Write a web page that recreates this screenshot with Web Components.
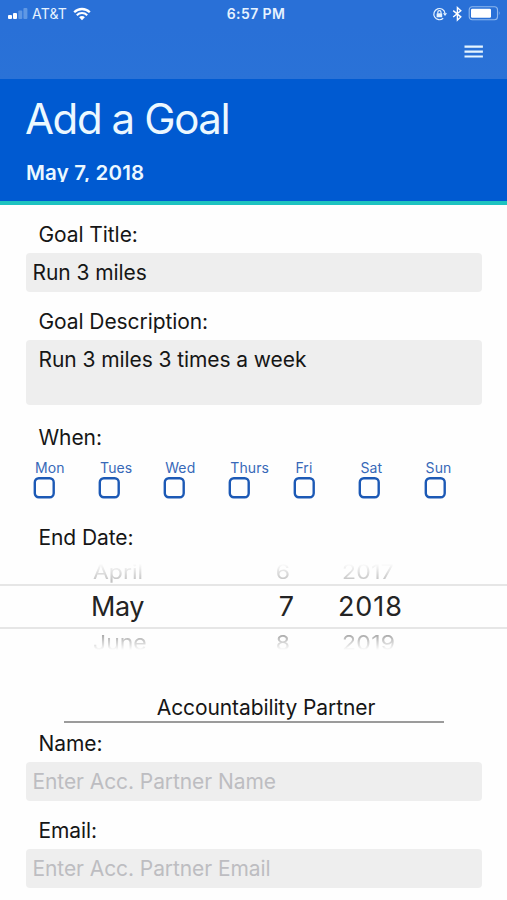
<!DOCTYPE html>
<html lang="en">
<head>
<meta charset="utf-8">
<title>Add a Goal</title>
<style>
  body {
    margin: 0;
    background: #fefefe;
    color: #161616;
    font-family: Inter, Roboto, "Liberation Sans", sans-serif;
  }
</style>
</head>
<body>
<goal-app>
  <status-bar carrier="AT&amp;T" time="6:57 PM"></status-bar>
  <nav-bar></nav-bar>
  <page-header>
    <span slot="title">Add a Goal</span>
    <span slot="date">May 7, 2018</span>
  </page-header>

  <form-field>
    <span slot="label">Goal Title:</span>Run 3 miles
  </form-field>
  <form-field multiline>
    <span slot="label">Goal Description:</span>Run 3 miles 3 times a week
  </form-field>
  <form-label style="margin-top: 21px">When:</form-label>
  <day-list>
    <day-check>Mon</day-check>
    <day-check>Tues</day-check>
    <day-check>Wed</day-check>
    <day-check>Thurs</day-check>
    <day-check>Fri</day-check>
    <day-check>Sat</day-check>
    <day-check>Sun</day-check>
  </day-list>
  <form-label style="margin-top: 27px">End Date:</form-label>
  <date-picker></date-picker>

  <section-title>Accountability Partner</section-title>
  <form-field placeholder style="margin-top: 9px">
    <span slot="label">Name:</span>Enter Acc. Partner Name
  </form-field>
  <form-field placeholder>
    <span slot="label">Email:</span>Enter Acc. Partner Email
  </form-field>
</goal-app>

<script>
class BaseElement extends HTMLElement {
  constructor() {
    super();
    this.attachShadow({ mode: 'open' });
    this.shadowRoot.innerHTML = this.render();
  }
}

class GoalApp extends BaseElement {
  render() {
    return `
      <style>
        :host {
          display: flex;
          flex-direction: column;
          width: 507px;
          height: 900px;
          overflow: hidden;
        }
      </style>
      <slot></slot>
    `;
  }
}

class StatusBar extends BaseElement {
  render() {
    return `
      <style>
        :host {
          display: grid;
          grid-template-columns: 1fr auto 1fr;
          align-items: center;
          height: 27px;
          box-sizing: border-box;
          padding: 0 6px 0 7px;
          background: #2970d7;
          color: #e6f3ff;
          font-size: 14px;
          line-height: 27px;
        }
        .left, .right { display: flex; align-items: center; }
        .right { justify-content: flex-end; }
        .carrier { margin: 0 6px 0 4px; letter-spacing: 0.2px; }
        .time { padding-left: 4px; font-weight: 600; letter-spacing: 0.4px; }
        svg { display: block; }
      </style>
      <div class="left">
        <svg width="21" height="13" viewBox="0 0 21 13">
          <rect x="1" y="8" width="4" height="4" rx="1" fill="#fff"/>
          <rect x="6" y="6" width="4" height="6" rx="1" fill="#fff"/>
          <rect x="11.3" y="3.5" width="4" height="8.5" rx="1" fill="#6098e4"/>
          <rect x="16.4" y="1" width="4" height="11" rx="1" fill="#6098e4"/>
        </svg>
        <span class="carrier">${this.getAttribute('carrier').replace('&', '&amp;')}</span>
        <svg width="18" height="14" viewBox="0 0 18 14">
          <path d="M1.2 5.2a11.1 11.1 0 0 1 15.6 0" fill="none" stroke="#fff" stroke-width="2.3"/>
          <path d="M3.8 8.2a7.3 7.3 0 0 1 10.4 0" fill="none" stroke="#fff" stroke-width="2.1"/>
          <path d="M6.1 10.2a4 4 0 0 1 5.8 0L9 13.2z" fill="#fff"/>
        </svg>
      </div>
      <div class="time">${this.getAttribute('time')}</div>
      <div class="right">
        <svg width="16" height="14" viewBox="0 0 16 14">
          <path d="M11.2 11.3A5.6 5.6 0 1 1 13 6.3" fill="none" stroke="#e6f3ff" stroke-width="1.2"/>
          <path d="M10.9 6.2h4.2l-2.1 2.9z" fill="#e6f3ff"/>
          <rect x="4.6" y="6.2" width="5.6" height="4" rx=".5" fill="#e6f3ff"/>
          <path d="M5.8 6.6V5.2a1.6 1.6 0 0 1 3.2 0v1.4" fill="none" stroke="#e6f3ff" stroke-width="1.2"/>
        </svg>
        <svg style="margin-left: 4px" width="11" height="16" viewBox="0 0 11 16">
          <path d="M1.2 4.6l7.6 6.3-3.4 3.3V1.6l3.4 3.1-7.6 6.3" fill="none" stroke="#fff" stroke-width="1.4"/>
        </svg>
        <svg style="margin-left: 5px" width="33" height="15" viewBox="0 0 33 15">
          <rect x="1.2" y=".8" width="28.3" height="13" rx="3" fill="none" stroke="#8fb8ee" stroke-width="1.1"/>
          <rect x="3" y="2.8" width="20" height="9" rx="1.2" fill="#fff"/>
          <path d="M30.9 5.1q1.6 2.2 0 4.4z" fill="#8fb8ee"/>
        </svg>
      </div>
    `;
  }
}

class NavBar extends BaseElement {
  render() {
    return `
      <style>
        :host {
          display: flex;
          justify-content: flex-end;
          height: 52px;
          box-sizing: border-box;
          padding: 18px 24px 0 0;
          background: linear-gradient(#2970d7, #2a72d7);
        }
      </style>
      <svg width="19" height="14" viewBox="0 0 19 14">
        <path d="M.5 1.7h18.4M.5 6.6h18.4M.5 11.5h18.4" stroke="#e6f5ff" stroke-width="2.2"/>
      </svg>
    `;
  }
}

class PageHeader extends BaseElement {
  render() {
    return `
      <style>
        :host {
          display: flex;
          flex-direction: column;
          height: 126px;
          box-sizing: border-box;
          padding: 15px 25px 0;
          background: #005ad1;
          border-bottom: 4px solid #1dc3c0;
          color: #ecf8ff;
        }
        .title {
          height: 50px;
          line-height: 50px;
          font-size: 42px;
          font-weight: 400;
          letter-spacing: -1.4px;
        }
        /* line box is shorter than the descenders */
        .date {
          height: 22px;
          margin-top: 16px;
          padding-left: 1px;
          line-height: 26px;
          font-size: 20.5px;
          font-weight: 600;
          letter-spacing: 0.2px;
          overflow: hidden;
        }
      </style>
      <div class="title"><slot name="title"></slot></div>
      <div class="date"><slot name="date"></slot></div>
    `;
  }
}

class FormLabel extends BaseElement {
  render() {
    return `
      <style>
        :host {
          display: block;
          height: 24px;
          padding-left: 38.5px;
          line-height: 24px;
          font-size: 21px;
          letter-spacing: -0.08px;
        }
      </style>
      <slot></slot>
    `;
  }
}

class FormField extends BaseElement {
  render() {
    return `
      <style>
        :host { display: block; margin-top: 18px; }
        .box {
          height: 39px;
          box-sizing: border-box;
          margin: 6px 25px 0 26px;
          padding-left: 6.5px;
          border-radius: 4px;
          background: #eee;
          font-size: 21px;
          line-height: 39px;
          letter-spacing: -0.08px;
          white-space: nowrap;
        }
        :host([multiline]) .box {
          height: 65px;
          padding: 8px 0 0 12.5px;
          line-height: 24px;
        }
        :host([placeholder]) .box { color: #bdbdc1; }
      </style>
      <form-label><slot name="label"></slot></form-label>
      <div class="box"><slot></slot></div>
    `;
  }
}

class DayList extends BaseElement {
  render() {
    return `
      <style>
        :host {
          display: grid;
          grid-template-columns: repeat(7, 65.1px);
          padding: 9px 0 0 33px;
        }
      </style>
      <slot></slot>
    `;
  }
}

class DayCheck extends BaseElement {
  render() {
    return `
      <style>
        :host {
          display: block;
          color: #3768b8;
          font-size: 14px;
          line-height: 17px;
        }
        .name { display: block; padding-left: 2px; letter-spacing: 0.1px; }
        svg { display: block; margin-top: 1px; }
      </style>
      <span class="name"><slot></slot></span>
      <svg width="23" height="22" viewBox="0 0 23 22">
        <rect x="1.8" y="1.3" width="18.9" height="18.9" rx="4" fill="none" stroke="#1c59b5" stroke-width="2.4"/>
      </svg>
    `;
  }
}

class DatePicker extends BaseElement {
  render() {
    return `
      <style>
        :host { display: block; margin-top: 10px; height: 99px; }
        .row {
          display: grid;
          grid-template-columns: 132px 115px 1fr;
          padding-left: 91px;
          font-size: 27px;
          line-height: 42px;
          color: #242424;
        }
        .month { letter-spacing: -0.4px; }
        .day { justify-self: end; margin-right: 44px; }
        .year { letter-spacing: 0.9px; }
        .selected {
          height: 41px;
          border-top: 2px solid #e6e6e6;
          border-bottom: 2px solid #e6e6e6;
        }
        /* neighbours turn away on the wheel: flattened and faded */
        .side {
          height: 24px;
          line-height: 24px;
          font-size: 23px;
          color: #aaa;
        }
        .side .month { padding-left: 2px; letter-spacing: 0; }
        .side .day { margin-right: 48px; }
        .side .year { padding-left: 4px; letter-spacing: 0.3px; }
        .before span { transform: scaleY(.85); }
        .after span { transform: translateY(2px) scaleY(.9); }
        .before {
          -webkit-mask-image: linear-gradient(transparent 15%, rgba(0,0,0,.7) 85%);
        }
        .after {
          -webkit-mask-image: linear-gradient(#000 25%, transparent 88%);
        }
      </style>
      <div class="row side before"><span class="month">April</span><span class="day">6</span><span class="year">2017</span></div>
      <div class="row selected"><span class="month">May</span><span class="day">7</span><span class="year">2018</span></div>
      <div class="row side after"><span class="month">June</span><span class="day">8</span><span class="year">2019</span></div>
    `;
  }
}

class SectionTitle extends BaseElement {
  render() {
    return `
      <style>
        :host {
          display: block;
          width: 356px;
          height: 25px;
          margin: 37px 0 0 64px;
          padding-left: 24px;
          border-bottom: 2px solid #9b9b9b;
          line-height: 24px;
          font-size: 21px;
          letter-spacing: -0.1px;
          text-align: center;
        }
      </style>
      <slot></slot>
    `;
  }
}

customElements.define('goal-app', GoalApp);
customElements.define('status-bar', StatusBar);
customElements.define('nav-bar', NavBar);
customElements.define('page-header', PageHeader);
customElements.define('form-label', FormLabel);
customElements.define('form-field', FormField);
customElements.define('day-list', DayList);
customElements.define('day-check', DayCheck);
customElements.define('date-picker', DatePicker);
customElements.define('section-title', SectionTitle);
</script>
</body>
</html>
